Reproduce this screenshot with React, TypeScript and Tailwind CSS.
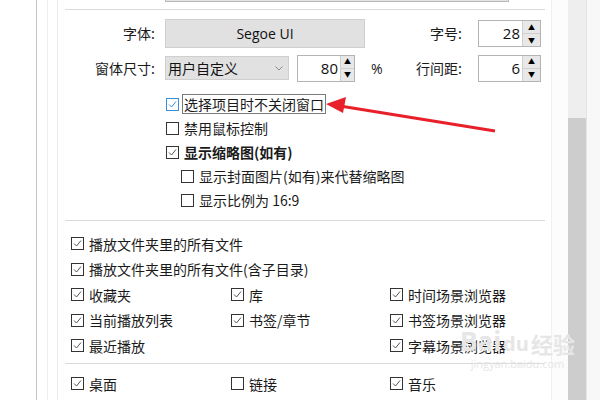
import React from 'react';

const cjk = { fontFamily: '"Noto Sans CJK SC", "Noto Sans", sans-serif' };
const latin = { fontFamily: '"Open Sans", "Noto Sans", sans-serif' };

function Check({ checked, focus }: { checked?: boolean; focus?: boolean }) {
  const color = focus ? '#3a8fdd' : '#333333';
  const tick = focus ? '#3a8fdd' : '#555555';
  return (
    <span
      className="inline-flex h-[13px] w-[13px] shrink-0 items-center justify-center border bg-white"
      style={{ borderColor: color }}
    >
      {checked && (
        <svg width="11" height="11" viewBox="0 0 11 11">
          <path d="M2 5.5 L4.5 8 L9 2.5" fill="none" stroke={tick} strokeWidth="1" />
        </svg>
      )}
    </span>
  );
}

function Row({
  label,
  checked,
  bold,
  focus,
  className = '',
}: {
  label: string;
  checked?: boolean;
  bold?: boolean;
  focus?: boolean;
  className?: string;
}) {
  return (
    <div className={`flex items-center gap-[3px] ${className}`}>
      <Check checked={checked} focus={focus} />
      <span
        className={`whitespace-nowrap text-[14px] leading-[18px] text-[#1a1a1a] ${bold ? 'font-bold' : ''} ${
          focus ? 'border border-[#7a7a7a] px-px' : 'px-[2px]'
        }`}
      >
        {label}
      </span>
    </div>
  );
}

function Spin({ value, w, btn }: { value: string; w: string; btn: string }) {
  return (
    <div className={`flex h-[27px] border border-[#b4b4b4] bg-white ${w}`}>
      <div className="flex flex-1 items-center justify-end pr-[2px] text-[15px] text-[#111]" style={latin}>
        {value}
      </div>
      <div className={`flex flex-col border-l border-[#cfcfcf] ${btn}`}>
        <div className="flex flex-1 items-center justify-center border-b border-[#cfcfcf] bg-[#e8e8e8] text-[7px] leading-none text-black">
          ▲
        </div>
        <div className="flex flex-1 items-center justify-center bg-[#e8e8e8] text-[7px] leading-none text-black">
          ▼
        </div>
      </div>
    </div>
  );
}

export default function App() {
  return (
    <div className="relative flex h-[400px] w-[600px] overflow-hidden bg-white" style={cjk}>
      {/* left frame lines */}
      <div className="w-[36px] shrink-0 bg-white" />
      <div className="w-[11px] shrink-0 border-l border-[#c4c4c4] bg-white" />
      <div className="w-[10px] shrink-0 border-l border-[#eeeeee] bg-white" />
      <div className="w-px shrink-0 bg-[#ececec]" />

      {/* main panel */}
      <div className="flex w-[493px] shrink-0 flex-col">
        <div className="ml-[107px] h-[2px] w-[344px] border-x border-b border-[#b8b8b8] bg-[#e3e3e3]" />
        <div className="ml-[7px] mr-[6px] mt-[7px] h-px bg-[#dadada]" />

        {/* font row */}
        <div className="mt-[9px] flex h-[29px] items-center">
          <div className="w-[97px] text-right text-[14px] text-[#1a1a1a]">字体:</div>
          <div
            className="ml-[10px] flex h-[29px] w-[200px] items-center justify-center border border-[#cfcfcf] bg-[#e1e1e1] text-[14px] text-[#111]"
            style={latin}
          >
            Segoe UI
          </div>
          <div className="w-[97px] text-right text-[14px] text-[#1a1a1a]">字号:</div>
          <div className="ml-[16px]">
            <Spin value="28" w="w-[63px]" btn="w-[18px]" />
          </div>
        </div>

        {/* size row */}
        <div className="mt-[6px] flex h-[28px] items-center">
          <div className="w-[97px] text-right text-[14px] text-[#1a1a1a]">窗体尺寸:</div>
          <div className="ml-[10px] flex h-[24px] w-[124px] items-center justify-between border border-[#cfcfcf] bg-[#e1e1e1] pl-[2px] pr-[5px] text-[14px] text-[#111]">
            <span>用户自定义</span>
            <svg width="8" height="5" viewBox="0 0 8 5">
              <path d="M0.5 0.5 L4 4 L7.5 0.5" fill="none" stroke="#8a8a8a" strokeWidth="1" />
            </svg>
          </div>
          <div className="ml-[8px]">
            <Spin value="80" w="w-[58px]" btn="w-[14px]" />
          </div>
          <div className="ml-[16px] w-[30px] text-[14px] text-[#1a1a1a]" style={latin}>
            %
          </div>
          <div className="w-[61px] text-right text-[14px] text-[#1a1a1a]">行间距:</div>
          <div className="ml-[16px]">
            <Spin value="6" w="w-[63px]" btn="w-[18px]" />
          </div>
        </div>

        {/* window options */}
        <div className="ml-[108px] mt-[10px] flex flex-col">
          <Row className="h-[24px]" label="选择项目时不关闭窗口" checked focus />
          <Row className="h-[24px]" label="禁用鼠标控制" />
          <Row className="h-[24px]" label="显示缩略图(如有)" checked bold />
          <Row className="ml-[15px] h-[24px]" label="显示封面图片(如有)来代替缩略图" />
          <Row className="ml-[15px] h-[24px]" label="显示比例为 16:9" />
        </div>

        <div className="ml-[7px] mr-[6px] mt-[8px] h-px bg-[#dadada]" />

        {/* folder options */}
        <div className="ml-[13px] mt-[10px] flex flex-col">
          <Row className="h-[25.5px]" label="播放文件夹里的所有文件" checked />
          <Row className="h-[25.5px]" label="播放文件夹里的所有文件(含子目录)" checked />
          <div className="grid h-[25.5px] grid-cols-[160px_159px_1fr]">
            <Row label="收藏夹" checked />
            <Row label="库" checked />
            <Row label="时间场景浏览器" checked />
          </div>
          <div className="grid h-[25.5px] grid-cols-[160px_159px_1fr]">
            <Row label="当前播放列表" checked />
            <Row label="书签/章节" checked />
            <Row label="书签场景浏览器" checked />
          </div>
          <div className="grid h-[25.5px] grid-cols-[160px_159px_1fr]">
            <Row label="最近播放" checked />
            <div />
            <Row label="字幕场景浏览器" checked />
          </div>
        </div>

        <div className="ml-[7px] mr-[6px] mt-[4.5px] h-px bg-[#dadada]" />

        <div className="ml-[13px] mt-[7px] grid h-[25.5px] grid-cols-[160px_159px_1fr]">
          <Row label="桌面" checked />
          <Row label="链接" />
          <Row label="音乐" checked />
        </div>
      </div>

      {/* scrollbar area */}
      <div className="w-[17px] shrink-0 border-l border-[#f0f0f0] bg-[#fcfcfc]" />
      <div className="flex w-[18px] shrink-0 flex-col bg-[#eeeeee]">
        <div className="h-[118px]" />
        <div className="flex-1 bg-[#cdcdcd]" />
      </div>
      <div className="flex-1 border-l border-[#e4e4e4] bg-[#f8f8f8]" />

      {/* red annotation arrow */}
      <svg className="pointer-events-none absolute left-0 top-0" width="600" height="400">
        <line x1="495" y1="131" x2="340" y2="106" stroke="#e8202a" strokeWidth="3" />
        <polygon points="326,104 346,97 343,113" fill="#e8202a" />
      </svg>

      {/* watermark */}
      <div className="pointer-events-none absolute left-[460px] top-[328px] flex flex-col items-center text-[#e6e6e6]">
        <div className="flex items-end gap-[2px] text-[26px] font-bold leading-none" style={latin}>
          <span>Bai</span>
          <span className="text-[20px]">du</span>
          <span className="text-[22px]" style={cjk}>
            经验
          </span>
        </div>
        <div className="mt-[4px] text-[11px] leading-none" style={latin}>
          jingyan.baidu.com
        </div>
      </div>
    </div>
  );
}
